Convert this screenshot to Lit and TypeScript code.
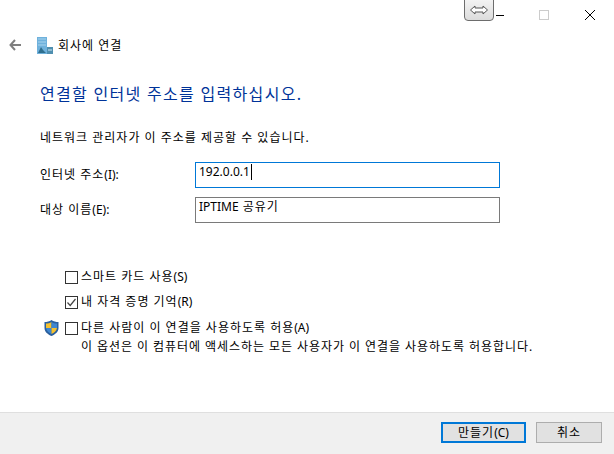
import { LitElement, html, css } from 'lit';
import { customElement } from 'lit/decorators.js';

@customElement('app-root')
export class AppRoot extends LitElement {
  static styles = css`
    :host {
      display: flex;
      flex-direction: column;
      width: 614px;
      height: 454px;
      background: #fff;
      color: #000;
      font-family: 'Noto Sans', 'Noto Sans CJK KR', 'Liberation Sans', sans-serif;
      font-size: 12px;
      line-height: 16px;
      letter-spacing: 1px;
      position: relative;
      overflow: hidden;
    }
    .lat { letter-spacing: 0; }
    .resize-tab {
      position: absolute;
      left: 464px;
      top: -2px;
      width: 30px;
      height: 23px;
      box-sizing: border-box;
      border: 1px solid #6d6d6d;
      border-radius: 0 0 4px 4px;
      background: linear-gradient(#f4f4f4, #dcdcdc);
      display: flex;
      align-items: center;
      justify-content: center;
    }
    .caption {
      height: 30px;
      display: flex;
      justify-content: flex-end;
      align-items: center;
      padding-right: 19px;
      box-sizing: border-box;
    }
    .caption svg { display: block; }
    .caption .min { margin-right: 35px; }
    .caption .max { margin-right: 36px; }
    .nav {
      display: flex;
      align-items: center;
      height: 16px;
      margin-top: 7px;
      padding-left: 9px;
    }
    .nav .title { margin-left: 5px; padding-top: 2px; }
    .nav .bld { margin-left: 15px; }
    .content {
      flex: 1;
      padding: 31px 0 0 40px;
    }
    h1 {
      margin: 0;
      font-weight: 400;
      font-size: 16px;
      line-height: 20px;
      letter-spacing: 1.3px;
      color: #003399;
    }
    .hint { margin: 26px 0 0; }
    .fields {
      display: grid;
      grid-template-columns: 155px 305px;
      row-gap: 9px;
      margin-top: 16px;
      align-items: center;
    }
    .field {
      height: 26px;
      box-sizing: border-box;
      border: 1px solid #7a7a7a;
      padding: 1px 3px;
      display: flex;
      align-items: flex-start;
    }
    .field.focus { border-color: #0078d7; }
    .caret { width: 1px; height: 16px; background: #000; margin-left: 1px; }
    .options {
      margin-top: 46px;
      padding-left: 25px;
      display: flex;
      flex-direction: column;
    }
    .opt { display: flex; align-items: center; height: 16px; gap: 3px; }
    .opt + .opt { margin-top: 9px; }
    .opt.shield-row { position: relative; margin-top: 10px; }
    .shield { position: absolute; left: -21px; top: 0; }
    .box {
      width: 13px;
      height: 13px;
      box-sizing: border-box;
      border: 1px solid #333;
      background: #fff;
    }
    .box svg { display: block; }
    .note { margin-left: 16px; margin-top: 3px; letter-spacing: 0.94px; }
    .footer {
      height: 42px;
      box-sizing: border-box;
      border-top: 1px solid #dfdfdf;
      background: #f0f0f0;
      display: flex;
      justify-content: flex-end;
      align-items: flex-start;
      gap: 10px;
      padding: 9px 12px 0 0;
    }
    .btn {
      height: 21px;
      box-sizing: border-box;
      border: 1px solid #adadad;
      background: #e1e1e1;
      display: flex;
      align-items: center;
      justify-content: center;
      width: 66px;
    }
    .btn.primary { width: 85px; border: 2px solid #0078d7; }
  `;

  render() {
    return html`
      <div class="caption">
        <svg class="min" width="8" height="10"><path d="M0 5.500H8" stroke="#000"/></svg>
        <svg class="max" width="10" height="10"><rect x=".5" y=".5" width="9" height="9" fill="none" stroke="#cccccc"/></svg>
        <svg width="10" height="10"><path d="M0 0L10 10M10 0L0 10" stroke="#000" fill="none"/></svg>
      </div>
      <div class="resize-tab">
        <svg width="18" height="10" viewBox="0 0 18 10">
          <path d="M.5 5L5 1V3H13V1L17.500 5L13 9V7H5V9Z" fill="#fff" stroke="#555"/>
        </svg>
      </div>
      <div class="nav">
        <svg width="13" height="12" viewBox="0 0 13 12">
          <path d="M6 1L1.500 6L6 11M2 6H12" fill="none" stroke="#7f7f7f" stroke-width="2"/>
        </svg>
        <svg class="bld" width="16" height="17" viewBox="0 0 16 17">
          <rect x="0" y="0" width="10" height="17" fill="#6fb1dc"/>
          <path d="M1 2H9M1 5H9M1 8H9" stroke="#a8d4ee"/>
          <path d="M1 16L4 10L6 13L9 16Z" fill="#2f6f8f"/>
          <rect x="10" y="10" width="6" height="7" fill="#4f8fb0"/>
          <path d="M11 13H15" stroke="#cfe6f2"/>
        </svg>
        <span class="title">회사에 연결</span>
      </div>
      <div class="content">
        <h1>연결할 인터넷 주소를 입력하십시오.</h1>
        <p class="hint">네트워크 관리자가 이 주소를 제공할 수 있습니다.</p>
        <div class="fields">
          <label>인터넷 주소<span class="lat">(I):</span></label>
          <div class="field focus"><span class="lat">192.0.0.1</span><span class="caret"></span></div>
          <label>대상 이름<span class="lat">(E):</span></label>
          <div class="field"><span class="lat">IPTIME</span>&nbsp;공유기</div>
        </div>
        <div class="options">
          <div class="opt"><span class="box"></span><span>스마트 카드 사용<span class="lat">(S)</span></span></div>
          <div class="opt">
            <span class="box">
              <svg width="11" height="11" viewBox="0 0 11 11"><path d="M1.500 5.500L4.200 8.500L9.500 2" fill="none" stroke="#444" stroke-width="1.200"/></svg>
            </span>
            <span>내 자격 증명 기억<span class="lat">(R)</span></span>
          </div>
          <div class="opt shield-row">
            <svg class="shield" width="15" height="16" viewBox="0 0 15 16">
              <path d="M7.500 0C5.500 1.500 3 2 .5 2V8C.5 12 4 14.500 7.500 16C11 14.500 14.500 12 14.500 8V2C12 2 9.500 1.500 7.500 0Z" fill="#2a5f9e"/>
              <path d="M7.500 2V8H2V3.500C4 3.500 6 3 7.500 2Z" fill="#f5c12e"/>
              <path d="M7.500 8H13V3.500C11 3.500 9 3 7.500 2Z" fill="#3f86d0"/>
              <path d="M7.500 8V14C5 13 2.500 11 2 8Z" fill="#3f86d0"/>
              <path d="M7.500 8H13C12.500 11 10 13 7.500 14Z" fill="#f5c12e"/>
            </svg>
            <span class="box"></span><span>다른 사람이 이 연결을 사용하도록 허용<span class="lat">(A)</span></span>
          </div>
          <div class="note">이 옵션은 이 컴퓨터에 액세스하는 모든 사용자가 이 연결을 사용하도록 허용합니다.</div>
        </div>
      </div>
      <div class="footer">
        <div class="btn primary"><span>만들기<span class="lat">(C)</span></span></div>
        <div class="btn">취소</div>
      </div>
    `;
  }
}
